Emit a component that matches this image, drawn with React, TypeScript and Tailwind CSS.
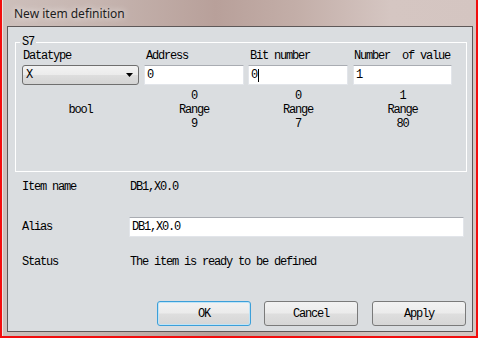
const mono = "font-['Liberation_Mono',monospace] text-[12px] leading-[14px] tracking-[-1.2px] text-black";

function TextBox({ value, caret, className }: { value: string; caret?: boolean; className?: string }) {
  return (
    <div
      className={`flex h-[20px] items-center border border-[#e2e5ea] border-t-[#a9acb2] bg-white pl-[2px] ${className ?? ''}`}
    >
      <span>{value}</span>
      {caret && <span className="ml-[1px] h-[13px] w-px bg-black" />}
    </div>
  );
}

function RangeInfo({ value, max }: { value: string; max: string }) {
  return (
    <div className="mt-[4px] flex flex-col items-center">
      <span>{value}</span>
      <span>Range</span>
      <span>{max}</span>
    </div>
  );
}

function DialogButton({ label, focused, className }: { label: string; focused?: boolean; className?: string }) {
  return (
    <button
      className={`h-[25px] w-[94px] rounded-[3px] border bg-[linear-gradient(180deg,#f2f2f2_0%,#ebebeb_48%,#dedede_52%,#d6d6d6_100%)] ${
        focused ? 'border-[#3c9fd9] shadow-[inset_0_0_0_1px_#bfe4f7]' : 'border-[#7a7a7a]'
      } ${className ?? ''}`}
    >
      {label}
    </button>
  );
}

export default function App() {
  return (
    <div className="h-[338px] w-[478px] border-x-2 border-b-2 border-[#f20d0d] bg-[#f20d0d]">
      <div className="flex h-full flex-col border-l border-[#ece6e4] bg-[linear-gradient(90deg,#cdbfbb_0%,#c6b5b0_20%,#b8a09a_45%,#c3aea8_62%,#d5c6c2_82%,#d4c5c1_100%)] pb-[4px] pl-[4px] pr-[3px]">
        <div className="flex h-[26px] items-center pl-[7px] pt-[1px] font-['Noto_Sans',sans-serif] text-[12px] text-[#1c1c1c] [text-shadow:0_0_7px_#ffffff]">
          New item definition
        </div>

        <div className={`flex flex-1 flex-col border border-[#5e5858] bg-[#dadde0] ${mono}`}>
          {/* S7 group */}
          <div className="relative ml-[7px] mt-[15px] h-[130px] w-[452px] border border-white">
            <span className="absolute left-[4px] top-[-8px] bg-[#dadde0] px-[2px]">S7</span>
            <div className="flex pl-[6px] pt-[6px]">
              <div className="flex w-[117px] flex-col">
                <span className="pl-[1px]">Datatype</span>
                <div className="mt-[2px] flex h-[20px] items-center justify-between rounded-[3px] border border-[#6f6f6f] bg-[linear-gradient(180deg,#f3f3f3_0%,#ebebeb_50%,#dddddd_52%,#d4d4d4_100%)] pl-[3px] pr-[5px]">
                  <span>X</span>
                  <svg width="7" height="4" viewBox="0 0 7 4">
                    <path d="M0 0H7L3.5 4Z" fill="#000" />
                  </svg>
                </div>
                <div className="mt-[4px] flex h-[42px] items-center justify-center">bool</div>
              </div>

              <div className="ml-[5px] flex w-[100px] flex-col">
                <span className="pl-[2px]">Address</span>
                <TextBox value="0" className="mt-[2px]" />
                <RangeInfo value="0" max="9" />
              </div>

              <div className="ml-[4px] flex w-[100px] flex-col">
                <span className="pl-[2px]">Bit number</span>
                <TextBox value="0" caret className="mt-[2px]" />
                <RangeInfo value="0" max="7" />
              </div>

              <div className="ml-[5px] flex w-[99px] flex-col">
                <span className="whitespace-pre pl-[1px]">Number  of value</span>
                <TextBox value="1" className="mt-[2px]" />
                <RangeInfo value="1" max="80" />
              </div>
            </div>
          </div>

          {/* Item details */}
          <div className="flex flex-col pl-[14px]">
            <div className="mt-[5px] flex h-[20px] items-center">
              <span className="w-[107px]">Item name</span>
              <span className="pl-[1px]">DB1,X0.0</span>
            </div>
            <div className="mt-[20px] flex h-[20px] items-center">
              <span className="w-[107px]">Alias</span>
              <TextBox value="DB1,X0.0" className="w-[335px] pl-[1px]" />
            </div>
            <div className="mt-[15px] flex h-[20px] items-center">
              <span className="w-[107px]">Status</span>
              <span className="pl-[1px]">The item is ready to be defined</span>
            </div>
          </div>

          <div className="mt-[29px] flex justify-end pr-[6px]">
            <DialogButton label="OK" focused />
            <DialogButton label="Cancel" className="ml-[13px]" />
            <DialogButton label="Apply" className="ml-[14px]" />
          </div>
        </div>
      </div>
    </div>
  );
}
